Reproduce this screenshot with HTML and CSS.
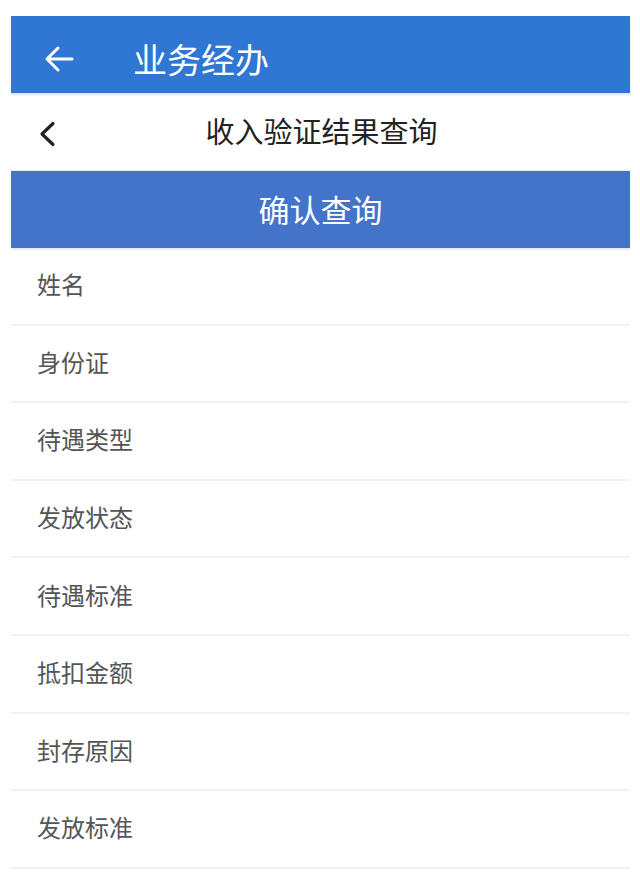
FILE: index.html
```html
<!DOCTYPE html>
<html lang="zh-CN">
<head>
<meta charset="utf-8">
<title>收入验证结果查询</title>
<link rel="stylesheet" href="styles.css">
</head>
<body>
<div class="app">
  <header class="appbar">
    <svg class="appbar-back" width="30" height="28" viewBox="0 0 30 28" aria-hidden="true">
      <path d="M28 14 H3 M14 3 L3 14 L14 25" fill="none" stroke="#fff" stroke-width="3" stroke-linecap="round" stroke-linejoin="round"/>
    </svg>
    <h1 class="appbar-title">业务经办</h1>
  </header>
  <div class="subbar">
    <div class="subbar-left">
      <svg width="18" height="26" viewBox="0 0 18 26" aria-hidden="true">
        <path d="M15 2.5 L4 13 L15 23.5" fill="none" stroke="#222" stroke-width="3.2" stroke-linecap="round" stroke-linejoin="round"/>
      </svg>
    </div>
    <div class="subbar-title">收入验证结果查询</div>
    <div></div>
  </div>
  <button class="confirm">确认查询</button>
  <ul class="fields">
    <li class="field">姓名</li>
    <li class="field">身份证</li>
    <li class="field">待遇类型</li>
    <li class="field">发放状态</li>
    <li class="field">待遇标准</li>
    <li class="field">抵扣金额</li>
    <li class="field">封存原因</li>
    <li class="field">发放标准</li>
  </ul>
</div>
</body>
</html>
```

FILE: styles.css
```css
* { box-sizing: border-box; }
html, body {
  margin: 0;
  padding: 0;
  background: #fff;
}
body {
  font-family: "Noto Sans CJK SC", "Noto Sans", sans-serif;
}
.app {
  margin: 16px 10px 0 11px;
}
.appbar {
  height: 77px;
  background: #2f77d2;
  display: flex;
  align-items: center;
  padding-left: 33px;
  padding-top: 8px;
  box-shadow: 0 2px 2px rgba(47, 119, 210, 0.18);
  position: relative;
  z-index: 1;
}
.appbar-back {
  display: block;
  flex: none;
}
.appbar-title {
  margin: 0 0 0 59px;
  font-size: 34px;
  font-weight: 400;
  color: #fff;
  line-height: 1;
}
.subbar {
  height: 78px;
  display: grid;
  grid-template-columns: 1fr auto 1fr;
  align-items: center;
  background: #fff;
  border-bottom: 1px solid #e6edf7;
}
.subbar-left {
  padding-left: 27px;
  padding-top: 4px;
  display: flex;
  align-items: center;
}
.subbar-left svg { display: block; }
.subbar-title {
  font-size: 29px;
  color: #222;
  line-height: 1;
  padding-left: 2px;
  padding-bottom: 2px;
}
.confirm {
  display: block;
  width: 100%;
  height: 77px;
  margin: 0;
  border: 0;
  padding: 0 0 2px;
  background: #4374c9;
  color: #fff;
  font-family: inherit;
  font-size: 31px;
  line-height: 1;
  box-shadow: 0 2px 2px rgba(67, 116, 201, 0.15);
}
.fields {
  list-style: none;
  margin: 0;
  padding: 0;
}
.field {
  height: 77.6px;
  display: flex;
  align-items: center;
  padding-left: 26px;
  padding-bottom: 3px;
  border-bottom: 2px solid #f1f1f1;
  font-size: 24px;
  color: #555;
  line-height: 1;
}
```
